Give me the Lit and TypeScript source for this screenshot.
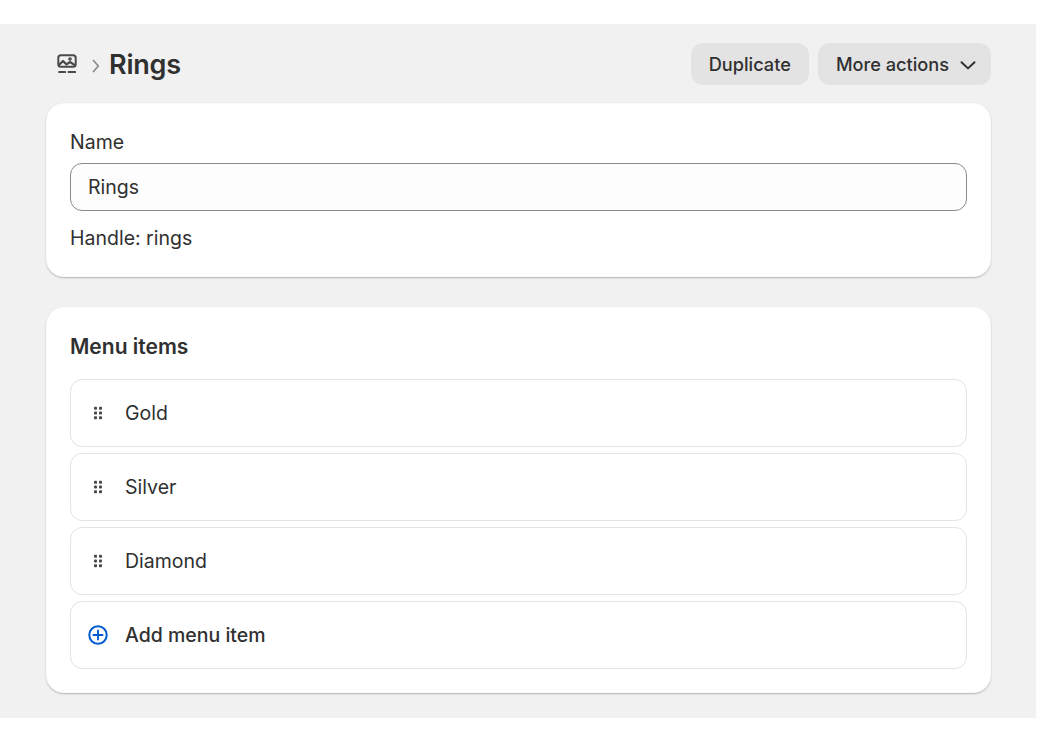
import { LitElement, html, css, svg } from "lit";
import { customElement } from "lit/decorators.js";

const items = ["Gold", "Silver", "Diamond"];

const grip = svg`<svg class="grip" width="10" height="14" viewBox="0 0 10 14"><g fill="#4a4a4a"><rect x="1" y="0.7" width="3" height="3" rx="0.8"/><rect x="6" y="0.7" width="3" height="3" rx="0.8"/><rect x="1" y="5.5" width="3" height="3" rx="0.8"/><rect x="6" y="5.5" width="3" height="3" rx="0.8"/><rect x="1" y="10.3" width="3" height="3" rx="0.8"/><rect x="6" y="10.3" width="3" height="3" rx="0.8"/></g></svg>`;

@customElement("app-root")
export class AppRoot extends LitElement {
  static styles = css`
    :host { display: block; font-family: Inter, "Liberation Sans", sans-serif; color: #303030; }
    .page { box-sizing: border-box; margin-top: 24px; width: 1036px; height: 694px; background: #f1f1f1; padding: 19px 45px 0 46px; display: flex; flex-direction: column; }
    .header { display: flex; align-items: center; height: 42px; margin-bottom: 18px; }
    .crumb { display: flex; align-items: center; margin-left: 9px; }
    .chev { margin-left: 13px; margin-right: 9px; }
    h1 { margin: 2px 0 0; font-size: 27px; font-weight: 600; line-height: 36px; letter-spacing: -0.2px; color: #303030; }
    .actions { margin-left: auto; display: flex; gap: 9px; }
    .btn { box-sizing: border-box; height: 42px; border-radius: 12px; background: #e3e3e3; display: flex; align-items: center; font-size: 18.2px; font-weight: 550; color: #303030; padding: 0 18px; }
    .btn svg { margin-left: 9px; margin-right: -5px; }
    .card { background: #fff; border-radius: 18px; box-shadow: 0 1px 0 rgba(0,0,0,.05), 0 1px 2px rgba(0,0,0,.2), inset 0 0 0 1px rgba(0,0,0,.02); padding: 24px; box-sizing: border-box; }
    .c1 { height: 174px; margin-bottom: 30px; }
    .c2 { height: 386px; padding-top: 25px; }
    .label { font-size: 19.5px; line-height: 30px; height: 30px; }
    .input { box-sizing: border-box; margin-top: 6px; height: 48px; border: 1.5px solid #8a8a8a; border-radius: 12px; background: #fdfdfd; display: flex; align-items: center; padding: 0 17px; font-size: 19.5px; }
    .help { margin-top: 12px; font-size: 19.5px; line-height: 30px; }
    h2 { margin: 0; font-size: 21px; font-weight: 600; line-height: 30px; height: 30px; }
    .list { display: flex; flex-direction: column; gap: 6px; margin-top: 17px; }
    .row { box-sizing: border-box; height: 68px; border: 1.5px solid #e3e3e3; border-radius: 12px; display: flex; align-items: center; padding-left: 16.5px; font-size: 19.5px; }
    .ico { width: 20px; display: flex; justify-content: center; margin-right: 17.5px; flex: none; }
    .add { font-weight: 550; }
  `;

  render() {
    return html`
      <div class="page">
        <div class="header">
          <div class="crumb">
            <svg width="24" height="24" viewBox="0 0 24 24" fill="none">
              <rect x="3.3" y="3.2" width="17.4" height="11.6" rx="2.6" stroke="#4a4a4a" stroke-width="2"/>
              <path d="M3.5 13.4 L8 9 L11.5 12.4 L15 10 L20.5 13.6" stroke="#4a4a4a" stroke-width="2.2" fill="none" stroke-linejoin="round"/>
              <circle cx="15" cy="7" r="1.8" fill="#4a4a4a"/>
              <rect x="3.3" y="19" width="7.7" height="2" rx=".5" fill="#4a4a4a"/>
              <rect x="12.7" y="19" width="8.3" height="2" rx=".5" fill="#4a4a4a"/>
            </svg>
            <svg class="chev" width="8" height="18" viewBox="0 0 8 18" fill="none"><path d="M1.5 5.5 L6.3 11 L1.5 16.5" stroke="#8a8a8a" stroke-width="1.7" stroke-linecap="round" stroke-linejoin="round"/></svg>
            <h1>Rings</h1>
          </div>
          <div class="actions">
            <div class="btn">Duplicate</div>
            <div class="btn">More actions
              <svg width="20" height="20" viewBox="0 0 20 20" fill="none"><path d="M3.5 8.2 L10 14.4 L16.5 8.2" stroke="#303030" stroke-width="2" stroke-linecap="round" stroke-linejoin="round"/></svg>
            </div>
          </div>
        </div>
        <div class="card c1">
          <div class="label">Name</div>
          <div class="input">Rings</div>
          <div class="help">Handle: rings</div>
        </div>
        <div class="card c2">
          <h2>Menu items</h2>
          <div class="list">
            ${items.map((i) => html`<div class="row"><span class="ico">${grip}</span>${i}</div>`)}
            <div class="row add">
              <span class="ico"><svg width="22" height="22" viewBox="0 0 22 22" fill="none"><circle cx="11" cy="11" r="9.6" stroke="#005bd3" stroke-width="2.2"/><path d="M11 6V16M6 11H16" stroke="#005bd3" stroke-width="2.1" stroke-linecap="round"/></svg></span>Add menu item
            </div>
          </div>
        </div>
      </div>
    `;
  }
}
